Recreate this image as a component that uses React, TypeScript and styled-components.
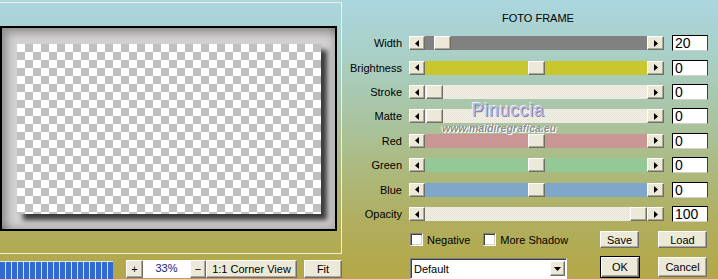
import React from 'react';
import styled, { createGlobalStyle, css } from 'styled-components';

const GlobalStyle = createGlobalStyle`
  *, *::before, *::after { box-sizing: border-box; }
  html, body { margin: 0; padding: 0; }
  body {
    width: 718px;
    height: 279px;
    overflow: hidden;
    font-family: 'Liberation Sans', Arial, sans-serif;
    font-size: 11px;
    color: #000;
  }
`;

const HATCH = css`
  background-color: #eceadf;
  background-image: repeating-conic-gradient(#f5f3ea 0 25%, #e3e1d4 0 50%);
  background-size: 2px 2px;
`;

const raised = css`
  background: #ece9d8;
  border: 1px solid;
  border-color: #fff #716f64 #716f64 #fff;
  box-shadow: inset -1px -1px 0 #aca899;
`;

const sunken = css`
  background: #fff;
  border: 1px solid;
  border-color: #000 #404040 #d4d0c8 #000;
`;

const Window = styled.div`
  display: flex;
  width: 718px;
  height: 279px;
  overflow: hidden;
  background: linear-gradient(
    to bottom,
    #aad6de 0%,
    #a9cfc6 20%,
    #a9c5a6 40%,
    #acba80 60%,
    #b0ae5e 80%,
    #b4a746 100%
  );
`;

/* ---------- preview side ---------- */

const PreviewSide = styled.div`
  display: flex;
  flex-direction: column;
  width: 350px;
  flex-shrink: 0;
`;

const PreviewFrame = styled.div`
  width: 342px;
  height: 254px;
  margin-top: 2px;
  padding-top: 23px;
  border: 1px solid #f0efe2;
  border-left: none;
`;

const Picture = styled.div`
  width: 337px;
  height: 205px;
  padding: 16px 0 0 15px;
  border: 2px solid #000;
  background: #d3d1d1;
  box-shadow: inset 8px 8px 9px -3px rgba(0, 0, 0, 0.3),
    inset -3px -3px 6px rgba(0, 0, 0, 0.18);
`;

const Checker = styled.div`
  width: 304px;
  height: 170px;
  background-color: #fff;
  background-image: conic-gradient(#c0c0c0 0 25%, #fff 0 50%, #c0c0c0 0 75%, #fff 0);
  background-size: 16px 16px;
  box-shadow: 6px 6px 5px rgba(30, 30, 30, 0.85);
`;

const Toolbar = styled.div`
  display: flex;
  align-items: flex-start;
  margin-top: 6px;
`;

const Progress = styled.div`
  width: 113px;
  height: 18px;
  margin-top: 1px;
  margin-right: 13px;
  border-top: 1px solid #dfe6f2;
  background-color: #d8e3f4;
  background-image: linear-gradient(to right, #2f6bd0 5px, #d8e3f4 5px);
  background-size: 6px 100%;
  background-repeat: repeat-x;
`;

const Btn = styled.button<{ $w: number; $h: number; $default?: boolean }>`
  ${raised};
  display: flex;
  align-items: center;
  justify-content: center;
  width: ${(p) => p.$w}px;
  height: ${(p) => p.$h}px;
  margin: 0;
  padding: 0;
  font-family: inherit;
  font-size: 11px;
  color: #000;
  ${(p) =>
    p.$default &&
    css`
      border-color: #000;
      box-shadow: inset 1px 1px 0 #fff, inset -1px -1px 0 #716f64, inset -2px -2px 0 #aca899;
    `}
`;

const ZoomField = styled.div`
  width: 47px;
  height: 18px;
  background: #fff;
  color: #0b1a7c;
  font-size: 11px;
  line-height: 16px;
  text-align: center;
`;

const FitSpacer = styled.div`
  width: 7px;
`;

/* ---------- settings side ---------- */

const SettingsSide = styled.div`
  position: relative;
  flex: 1;
  display: flex;
  flex-direction: column;
`;

const Title = styled.div`
  height: 14px;
  margin-top: 11px;
  padding-left: 8px;
  line-height: 14px;
  text-align: center;
  font-size: 11px;
`;

const SliderGrid = styled.div`
  display: grid;
  grid-template-columns: 52px 256px 36px;
  grid-auto-rows: 24.43px;
  column-gap: 7px;
  align-items: center;
  margin-top: 6px;
`;

const Label = styled.div`
  text-align: right;
  white-space: nowrap;
`;

const Slider = styled.div`
  display: flex;
  width: 255px;
  height: 14px;
`;

const Arrow = styled.div<{ $w: number }>`
  ${raised};
  display: flex;
  align-items: center;
  justify-content: center;
  width: ${(p) => p.$w}px;
  height: 14px;
`;

const Track = styled.div<{ $fill: string }>`
  position: relative;
  flex: 1;
  ${(p) => (p.$fill === 'hatch' ? HATCH : css`background: ${p.$fill};`)}
`;

const Thumb = styled.div`
  ${raised};
  position: absolute;
  top: 0;
  width: 17px;
  height: 14px;
`;

const ValueBox = styled.div`
  ${sunken};
  width: 36px;
  height: 16px;
  padding-left: 2px;
  font-size: 14px;
  line-height: 14px;
`;

const Watermark = styled.div`
  position: absolute;
  left: 92px;
  top: 100px;
  display: flex;
  flex-direction: column;
  align-items: center;
  pointer-events: none;
`;

const WaterName = styled.div`
  margin-left: 18px;
  font-size: 18px;
  letter-spacing: 0.6px;
  color: #b9bce2;
  text-shadow: 1px 1px 0 #7e80a4, -1px -1px 0 #eef0ff;
  line-height: 20px;
`;

const WaterUrl = styled.div`
  margin-top: 3px;
  font-size: 10.5px;
  font-weight: bold;
  font-style: italic;
  color: #8d8d8d;
  text-shadow: 1px 1px 0 #fff, -1px 0 0 #fff;
  line-height: 11px;
`;

const Footer = styled.div`
  display: grid;
  grid-template-columns: 171px 39px 49px;
  grid-template-rows: 17px 23px;
  column-gap: 19px;
  row-gap: 8px;
  margin-top: 5px;
  padding-left: 60px;
`;

const Checks = styled.div`
  display: flex;
  align-items: center;
`;

const CheckItem = styled.label<{ $w: number }>`
  display: flex;
  align-items: center;
  gap: 4px;
  width: ${(p) => p.$w}px;
  font-size: 11px;
`;

const Box = styled.span`
  ${sunken};
  width: 13px;
  height: 13px;
  border-color: #808080 #fff #fff #808080;
  box-shadow: inset 1px 1px 0 #404040, inset -1px -1px 0 #d4d0c8;
`;

const Select = styled.div`
  ${sunken};
  display: flex;
  align-items: center;
  justify-content: space-between;
  width: 157px;
  height: 21px;
  margin-top: 2px;
  padding: 0 1px 0 3px;
  border-color: #808080 #fff #fff #808080;
  box-shadow: inset 1px 1px 0 #404040;
`;

const SelectBtn = styled.div`
  ${raised};
  display: flex;
  align-items: center;
  justify-content: center;
  width: 15px;
  height: 15px;
`;

type Row = { label: string; value: string; pos: number; fill: string };

const ROWS: Row[] = [
  { label: 'Width', value: '20', pos: 0.044, fill: '#818181' },
  { label: 'Brightness', value: '0', pos: 0.502, fill: '#c9c72e' },
  { label: 'Stroke', value: '0', pos: 0.005, fill: 'hatch' },
  { label: 'Matte', value: '0', pos: 0.005, fill: 'hatch' },
  { label: 'Red', value: '0', pos: 0.502, fill: '#c99595' },
  { label: 'Green', value: '0', pos: 0.502, fill: '#93c897' },
  { label: 'Blue', value: '0', pos: 0.502, fill: '#7fa7c9' },
  { label: 'Opacity', value: '100', pos: 1, fill: 'hatch' },
];

const Tri = ({ dir }: { dir: 'left' | 'right' | 'down' }) => {
  const pts = {
    left: '4,0 0,3.5 4,7',
    right: '0,0 4,3.5 0,7',
    down: '0,0 7,0 3.5,4',
  }[dir];
  const w = dir === 'down' ? 7 : 4;
  const h = dir === 'down' ? 4 : 7;
  return (
    <svg width={w} height={h} viewBox={`0 0 ${w} ${h}`}>
      <polygon points={pts} fill='#000' />
    </svg>
  );
};

const SliderRow = ({ row }: { row: Row }) => (
  <>
    <Label>{row.label}</Label>
    <Slider>
      <Arrow $w={16}>
        <Tri dir='left' />
      </Arrow>
      <Track $fill={row.fill}>
        <Thumb style={{ left: Math.round(row.pos * 205) }} />
      </Track>
      <Arrow $w={17}>
        <Tri dir='right' />
      </Arrow>
    </Slider>
    <ValueBox>{row.value}</ValueBox>
  </>
);

export default function App() {
  return (
    <Window>
      <GlobalStyle />
      <PreviewSide>
        <PreviewFrame>
          <Picture>
            <Checker />
          </Picture>
        </PreviewFrame>
        <Toolbar>
          <Progress />
          <Btn $w={17} $h={18}>+</Btn>
          <ZoomField>33%</ZoomField>
          <Btn $w={16} $h={18}>−</Btn>
          <Btn $w={91} $h={18}>1:1 Corner View</Btn>
          <FitSpacer />
          <Btn $w={38} $h={18}>Fit</Btn>
        </Toolbar>
      </PreviewSide>

      <SettingsSide>
        <Title>FOTO FRAME</Title>
        <SliderGrid>
          {ROWS.map((r) => (
            <SliderRow key={r.label} row={r} />
          ))}
        </SliderGrid>
        <Footer>
          <Checks>
            <CheckItem $w={75}>
              <Box />
              Negative
            </CheckItem>
            <CheckItem $w={100}>
              <Box />
              More Shadow
            </CheckItem>
          </Checks>
          <Btn $w={39} $h={17}>Save</Btn>
          <Btn $w={49} $h={17}>Load</Btn>
          <Select>
            Default
            <SelectBtn>
              <Tri dir='down' />
            </SelectBtn>
          </Select>
          <Btn $w={40} $h={22} $default>OK</Btn>
          <Btn $w={49} $h={20} style={{ marginTop: 1 }}>Cancel</Btn>
        </Footer>
        <Watermark>
          <WaterName>Pinuccia</WaterName>
          <WaterUrl>www.maidiregrafica.eu</WaterUrl>
        </Watermark>
      </SettingsSide>
    </Window>
  );
}
